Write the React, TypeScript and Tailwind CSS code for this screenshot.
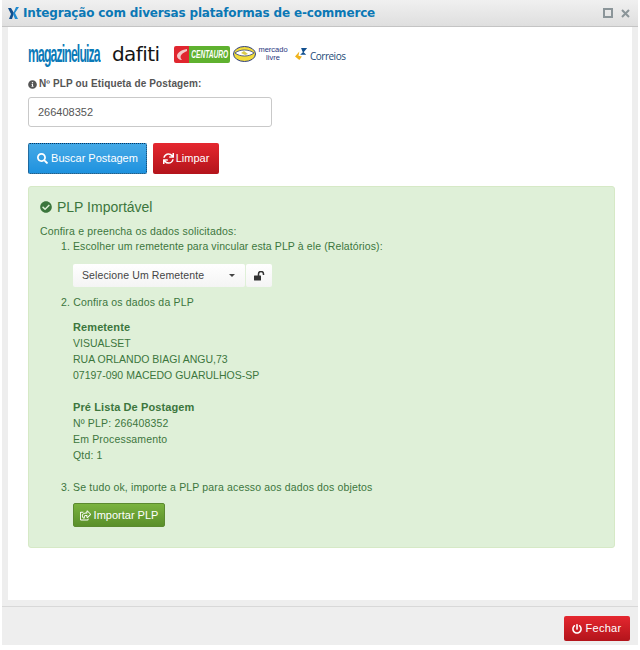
import { FaSearch, FaSync, FaRegShareSquare, FaPowerOff, FaInfoCircle, FaCheckCircle } from "react-icons/fa";

function Logos() {
  return (
    <div className="flex items-center h-[34px] ml-[20px]">
      <div className="w-[72px] shrink-0">
        <span className="block font-['Liberation_Sans',sans-serif] font-bold text-[#0a7ab8] text-[24px] tracking-[-1.7px] scale-x-[0.51] origin-left whitespace-nowrap leading-none">
          magazineluiza
        </span>
      </div>
      <span className="ml-[12px] w-[47px] shrink-0 font-['DejaVu_Sans',sans-serif] text-[#151515] text-[20px] tracking-[-0.6px] leading-none">
        dafiti
      </span>
      <div className="ml-[15px] flex h-[17px] w-[56px] shrink-0 overflow-hidden rounded-[2px]">
        <div className="w-[15px] bg-[#e0262f] flex items-center justify-center">
          <svg width="12" height="13" viewBox="0 0 12 13">
            <path d="M11 1 C5 2 1 5 1 8 C1 10 3 12 6 12 C4 10 4 8 6 6 C7 5 9 4 11 3 Z" fill="#f4c9c9" />
          </svg>
        </div>
        <div className="w-[41px] bg-[#5fb12f] flex items-center justify-center">
          <span className="text-white font-['Liberation_Sans',sans-serif] italic font-bold text-[11px] scale-x-[0.6] whitespace-nowrap">
            CENTAURO
          </span>
        </div>
      </div>
      <svg className="ml-[3px] shrink-0" width="23" height="16" viewBox="0 0 23 16">
        <ellipse cx="11.5" cy="8" rx="11" ry="7.5" fill="#f2dc3a" stroke="#30407f" strokeWidth="1" />
        <path d="M2 7 C7 3 16 3 21 7 C16 11 7 11 2 7 Z" fill="#fff" stroke="#30407f" strokeWidth="0.8" />
        <path d="M8 7 L11 5 L15 8 L12 9 Z" fill="#d9c94a" />
      </svg>
      <div className="ml-[1px] w-[32px] shrink-0 text-center text-[#27357e] font-['Liberation_Sans',sans-serif] text-[7.5px] leading-[8px]">
        <div>mercado</div>
        <div>livre</div>
      </div>
      <svg className="ml-[6px] shrink-0" width="13" height="14" viewBox="0 0 15 14">
        <path d="M7 0 L14 0 L10 5 L13 8 L6 8 L9 5 Z" fill="#12508f" />
        <path d="M5 4 L0 10 L5 14 L8 10 L4 9 Z" fill="#f0b31c" />
      </svg>
      <span className="ml-[2px] mt-[3px] shrink-0 text-[#1c4a78] font-['Open_Sans',sans-serif] text-[10px] tracking-[-0.5px] leading-none">Correios</span>
    </div>
  );
}

export default function App() {
  return (
    <div className="w-[640px] h-[650px] bg-white font-['Liberation_Sans',sans-serif] text-[11px]">
      <div className="ml-[2px] w-[636px] h-[645px] flex flex-col bg-[#eeeeee]">
        <div className="h-[27px] shrink-0 flex items-center justify-between bg-gradient-to-b from-[#f0f0f0] to-[#dfdfdf] border-b border-[#c4c4c4]">
          <div className="flex items-center pl-[4px]">
            <svg width="14" height="14" viewBox="0 0 14 14">
              <path d="M2 2 L5 2 L8 7 L6 13 L3 13 L5 8 Z" fill="#12508f" />
              <path d="M10 1 L13 1 L9 7 L12 13 L9 13 L7 8 Z" fill="#1f8ad0" />
            </svg>
            <span className="ml-[3px] font-['DejaVu_Sans',sans-serif] font-bold text-[12px] tracking-[-0.16px] text-[#0b78b5] whitespace-nowrap">
              Integração com diversas plataformas de e-commerce
            </span>
          </div>
          <div className="flex items-center gap-[8px] pr-[8px]">
            <div className="w-[10px] h-[10px] border-2 border-[#8b9599]"></div>
            <svg width="9" height="9" viewBox="0 0 9 9">
              <path d="M1 1 L8 8 M8 1 L1 8" stroke="#8b9599" strokeWidth="2" />
            </svg>
          </div>
        </div>

        <div className="flex-1 mx-[6px] bg-white pt-[10px] flex flex-col">
          <Logos />
          <div className="ml-[20px] mt-[6px] flex items-center text-[10px] font-bold text-[#555555] leading-[14px]">
            <FaInfoCircle size={9} className="mr-[2px] text-[#555555]" />
            <span className="tracking-[0.13px]">Nº PLP ou Etiqueta de Postagem:</span>
          </div>
          <div className="ml-[20px] mt-[6px] w-[244px] h-[30px] border border-[#c9c9c9] rounded-[3px] bg-white flex items-center pl-[9px] text-[11px] text-[#555555]">
            266408352
          </div>
          <div className="ml-[20px] mt-[16px] flex gap-[6px]">
            <button className="w-[119px] h-[31px] rounded-[2px] bg-gradient-to-b from-[#44a9e6] to-[#1d92df] border border-dotted border-[#10395c] text-white text-[11px] flex items-center justify-center gap-[3px]">
              <FaSearch size={11} />
              Buscar Postagem
            </button>
            <button className="w-[66px] h-[31px] rounded-[2px] bg-gradient-to-b from-[#e5272f] to-[#b3141b] text-white text-[11px] flex items-center justify-center gap-[2px]">
              <FaSync size={11} />
              Limpar
            </button>
          </div>

          <div className="ml-[20px] mt-[12px] w-[587px] h-[362px] rounded-[3px] bg-[#dff0d8] border border-[#d6e9c6] text-[#3c763d] pl-[11px] pt-[11px]">
            <div className="flex items-center text-[14px] leading-[18px]">
              <FaCheckCircle size={12} className="mr-[5px]" />
              PLP Importável
            </div>
            <div className="mt-[8px] text-[10.5px] leading-[15px] tracking-[0.17px]">Confira e preencha os dados solicitados:</div>
            <div className="ml-[21px] text-[10.5px] leading-[15px] tracking-[0.11px]">1. Escolher um remetente para vincular esta PLP à ele (Relatórios):</div>
            <div className="ml-[33px] mt-[10px] flex gap-px">
              <div className="w-[172px] h-[23px] bg-gradient-to-b from-white to-[#f4f4f4] rounded-[2px] flex items-center justify-between px-[9px] text-[#444444] text-[10.5px] tracking-[0.12px]">
                Selecione Um Remetente
                <span className="w-0 h-0 border-x-[3px] border-x-transparent border-t-[3px] border-t-[#444444] mr-[1px]"></span>
              </div>
              <div className="w-[26px] h-[23px] bg-gradient-to-b from-white to-[#f4f4f4] rounded-[2px] flex items-center justify-center">
                <svg width="11" height="10" viewBox="0 0 11 10">
                  <rect x="0" y="4.5" width="7" height="5" rx="0.5" fill="#333333" />
                  <path d="M4.5 5 V3 A2.2 2.2 0 0 1 9.5 3 V4" fill="none" stroke="#333333" strokeWidth="1.5" />
                </svg>
              </div>
            </div>
            <div className="ml-[21px] mt-[7px] text-[10.5px] leading-[16px] tracking-[0.17px]">2. Confira os dados da PLP</div>
            <div className="ml-[33px] mt-[9px] text-[10.5px] leading-[16px]">
              <div className="font-bold text-[11px] tracking-[0.1px]">Remetente</div>
              <div>VISUALSET</div>
              <div>RUA ORLANDO BIAGI ANGU,73</div>
              <div>07197-090 MACEDO GUARULHOS-SP</div>
              <div className="mt-[16px] font-bold text-[11px] tracking-[0.1px]">Pré Lista De Postagem</div>
              <div className="tracking-[0.17px]">Nº PLP: 266408352</div>
              <div className="tracking-[0.17px]">Em Processamento</div>
              <div className="tracking-[0.17px]">Qtd: 1</div>
            </div>
            <div className="ml-[21px] mt-[16px] text-[10.5px] leading-[16px] tracking-[0.15px]">3. Se tudo ok, importe a PLP para acesso aos dados dos objetos</div>
            <button className="ml-[33px] mt-[8px] w-[92px] h-[24px] rounded-[2px] bg-gradient-to-b from-[#7ab33e] to-[#5a8f2a] border border-[#5b8a2f] text-white text-[11px] flex items-center justify-center gap-[3px]">
              <FaRegShareSquare size={11} />
              Importar PLP
            </button>
          </div>
        </div>

        <div className="h-[39px] mt-[6px] shrink-0 border-t border-[#d8d8d8] bg-[#eeeeee] flex items-start justify-end pr-[8px] pt-[9px]">
          <button className="w-[66px] h-[25px] rounded-[2px] bg-gradient-to-b from-[#e5272f] to-[#b3141b] text-white text-[11px] tracking-[0.3px] flex items-center justify-center gap-[3px]">
            <FaPowerOff size={10} />
            Fechar
          </button>
        </div>
      </div>
    </div>
  );
}
